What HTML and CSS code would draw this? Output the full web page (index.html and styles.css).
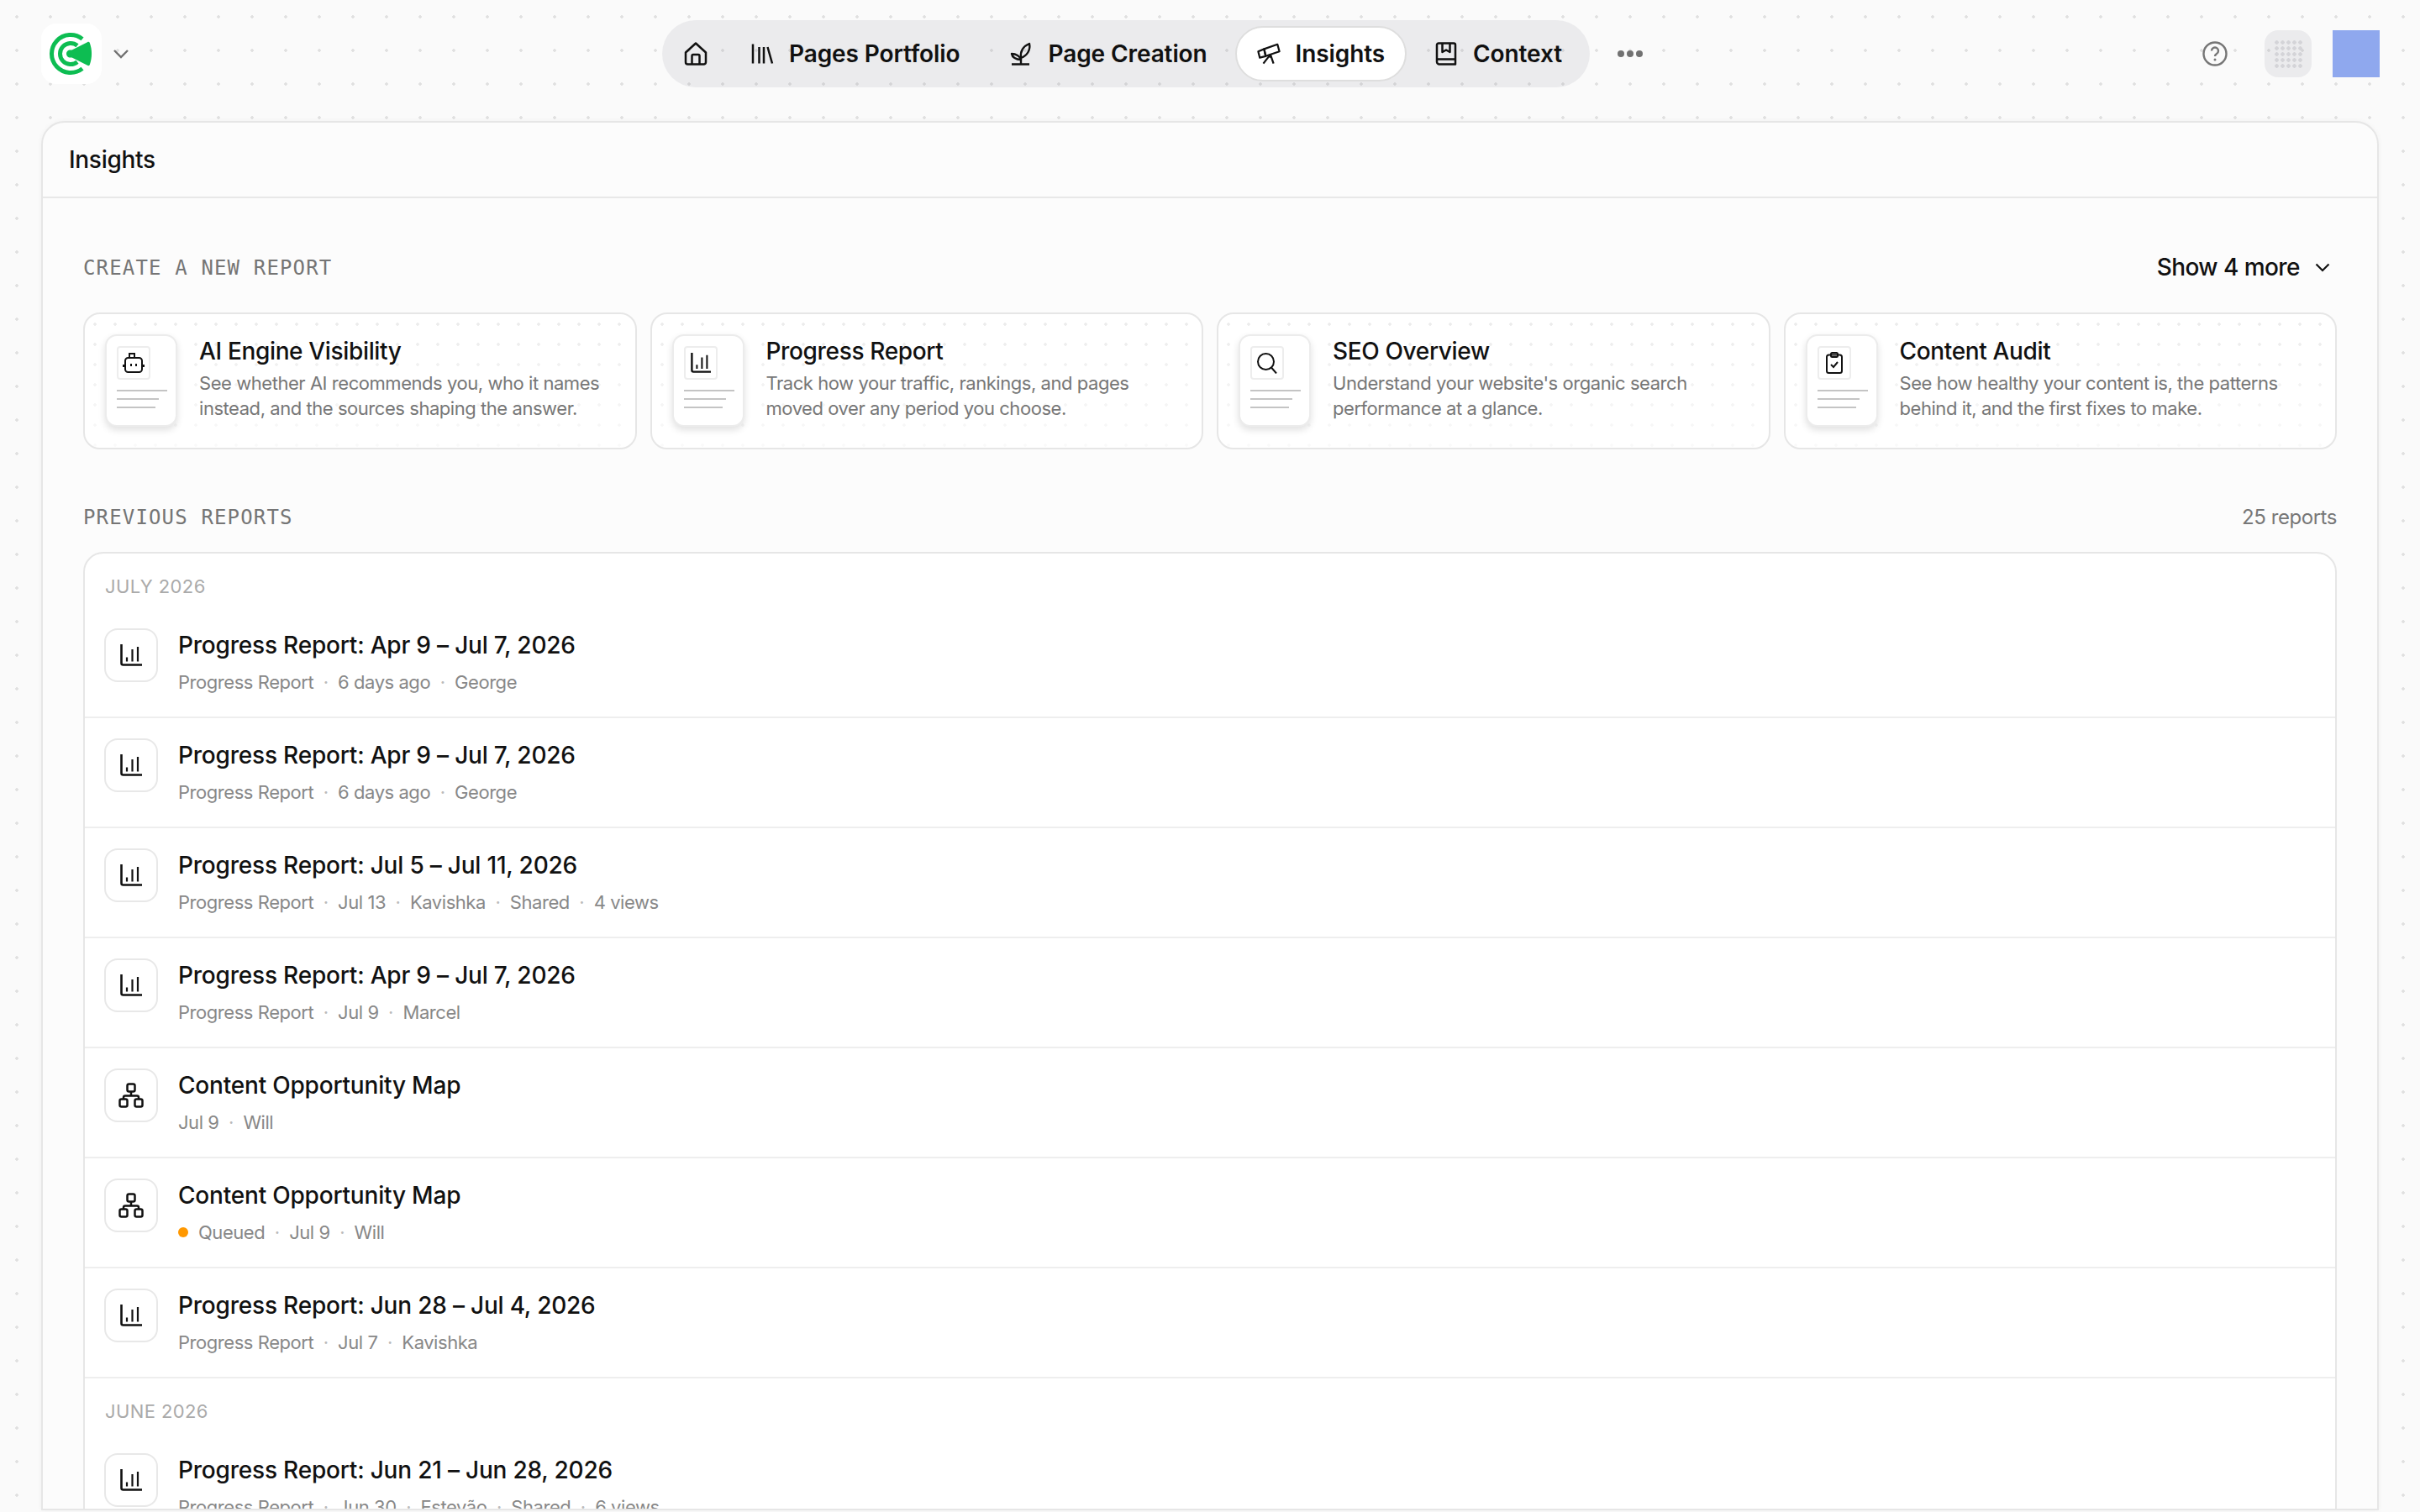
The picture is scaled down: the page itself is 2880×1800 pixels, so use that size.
FILE: index.html
```html
<!DOCTYPE html>
<html lang="en">
<head>
    <meta charset="UTF-8">
    <meta name="viewport" content="width=device-width, initial-scale=1.0">
    <title>Insights</title>
    <link rel="stylesheet" href="styles.css">
</head>
<body>
    <svg class="defs" aria-hidden="true">
        <symbol id="i-bars" viewBox="0 0 26 26">
            <path d="M1.500 0v22.500a2 2 0 0 0 2 2H26" fill="none" stroke="currentColor" stroke-width="2.600"/>
            <path d="M8 15.500v5M14.500 6v14.500M21 3v17.500" fill="none" stroke="currentColor" stroke-width="2.200"/>
        </symbol>
        <symbol id="i-org" viewBox="0 0 30 30">
            <g fill="none" stroke="currentColor" stroke-width="2.500">
                <rect x="10.500" y="1.500" width="9" height="9" rx="2"/>
                <rect x="1.500" y="19.500" width="9" height="9" rx="2"/>
                <rect x="19.500" y="19.500" width="9" height="9" rx="2"/>
                <path d="M15 10.500v5M6 19.500v-2a2 2 0 0 1 2-2h14a2 2 0 0 1 2 2v2"/>
            </g>
        </symbol>
    </svg>

    <header class="topbar">
        <div class="brand">
            <div class="brand-tile">
                <svg width="54" height="52" viewBox="0 0 54 52">
                    <g fill="none" stroke="#0dbd52" stroke-width="5">
                        <path d="M40 8.400A22.500 22.500 0 1 0 40 43.600"/>
                        <path d="M34 16.200A12.600 12.600 0 1 0 34 35.800"/>
                    </g>
                    <path d="M21 26c0-2.400 2-4.500 4.500-4.500 1 0 1.800.2 2.600-.3L46 12.200c1.300-.7 2.300-.4 2.800.9 3 8.200 3 17.600 0 25.800-.5 1.300-1.500 1.600-2.800.9L28.100 30.800c-.8-.5-1.600-.3-2.600-.3-2.500 0-4.500-2.100-4.500-4.500z" fill="#0dbd52"/>
                </svg>
            </div>
            <svg class="brand-caret" width="20" height="12" viewBox="0 0 20 12"><path d="M2 2l8 8 8-8" fill="none" stroke="#707070" stroke-width="2.400"/></svg>
        </div>

        <nav class="nav">
            <div class="nav-pill">
                <a class="nav-item home">
                    <svg class="nav-icon" viewBox="0 0 28 28"><g fill="none" stroke="#111" stroke-width="2.500" stroke-linejoin="round"><path d="M2 12.500L14 1.500l12 11v11.500a2.500 2.500 0 0 1-2.500 2.500h-19A2.500 2.500 0 0 1 2 24z"/><path d="M9.500 26.500V16.500a1.500 1.500 0 0 1 1.500-1.500h6a1.500 1.500 0 0 1 1.500 1.500v10"/></g></svg>
                </a>
                <a class="nav-item">
                    <svg class="nav-icon" viewBox="0 0 28 28"><path d="M3 2.500v23M10.500 6v19.500M16 6v19.500M20.500 6l5.500 19.500" fill="none" stroke="#111" stroke-width="2.500"/></svg>
                    Pages Portfolio
                </a>
                <a class="nav-item">
                    <svg class="nav-icon" viewBox="0 0 28 28"><g fill="none" stroke="#111" stroke-width="2.400" stroke-linejoin="round"><path d="M3 26.500h21M14 26.500V19"/><path d="M14 19c-1-8 3-14 10-17 1.500 7-2 14-10 17z"/><path d="M14 21c-1-4-6-7-11-7 .5 4 5 7 11 7z"/></g></svg>
                    Page Creation
                </a>
                <a class="nav-item active">
                    <svg class="nav-icon" viewBox="0 0 30 28"><g fill="none" stroke="#111" stroke-width="2.400" stroke-linejoin="round"><path d="M9 8l17-6 2.500 9L11 17z"/><path d="M1.500 11L9 8l2 9-7.500 2z"/><path d="M17 15L8 26.500M17 15l4 11.500M17 15v4"/></g></svg>
                    Insights
                </a>
                <a class="nav-item">
                    <svg class="nav-icon" viewBox="0 0 28 28"><g fill="none" stroke="#111" stroke-width="2.500" stroke-linejoin="round"><path d="M3 22V3.500A2 2 0 0 1 5 1.500h18a2 2 0 0 1 2 2v23H6a3 3 0 0 1-3-3z"/><path d="M3 20.500h22"/><path d="M9.500 2v10l4.500-2.500 4.500 2.500V2"/></g></svg>
                    Context
                </a>
            </div>
            <div class="nav-more"><i></i><i></i><i></i></div>
        </nav>

        <div class="actions">
            <svg class="help" width="30" height="30" viewBox="0 0 30 30">
                <circle cx="15" cy="15" r="13.500" fill="none" stroke="#767676" stroke-width="2.400"/>
                <path d="M11 11.500a4 4 0 1 1 6 3.500c-1.300.8-2 1.400-2 3" fill="none" stroke="#767676" stroke-width="2.400"/>
                <circle cx="15" cy="22" r="1.500" fill="#767676"/>
            </svg>
            <div class="apps"><div class="apps-dots"></div></div>
            <div class="avatar"></div>
        </div>
    </header>

    <main class="panel">
        <div class="panel-head">Insights</div>
        <div class="panel-body">
            <div class="section-head">
                <span class="section-label">CREATE A NEW REPORT</span>
                <span class="show-more">Show 4 more
                    <svg width="18" height="11" viewBox="0 0 18 11"><path d="M1.500 1.500L9 9l7.500-7.500" fill="none" stroke="#111" stroke-width="2.200"/></svg>
                </span>
            </div>

            <div class="cards">
                <div class="card">
                    <div class="thumb">
                        <div class="thumb-icon">
                            <svg width="26" height="26" viewBox="0 0 26 26"><g fill="none" stroke="#111" stroke-width="2"><rect x="3" y="7" width="20" height="17" rx="3.500"/><path d="M8 7V2h6v5M1 15v3M25 15v3M10 14v3M16 14v3"/></g></svg>
                        </div>
                        <div class="thumb-line w1"></div>
                        <div class="thumb-line w2"></div>
                        <div class="thumb-line w3"></div>
                    </div>
                    <div class="card-text">
                        <div class="card-title">AI Engine Visibility</div>
                        <div class="card-desc">See whether AI recommends you, who it names instead, and the sources shaping the answer.</div>
                    </div>
                </div>
                <div class="card">
                    <div class="thumb">
                        <div class="thumb-icon">
                            <svg width="24" height="24"><use href="#i-bars"/></svg>
                        </div>
                        <div class="thumb-line w1"></div>
                        <div class="thumb-line w2"></div>
                        <div class="thumb-line w3"></div>
                    </div>
                    <div class="card-text">
                        <div class="card-title">Progress Report</div>
                        <div class="card-desc">Track how your traffic, rankings, and pages moved over any period you choose.</div>
                    </div>
                </div>
                <div class="card">
                    <div class="thumb">
                        <div class="thumb-icon">
                            <svg width="26" height="26" viewBox="0 0 26 26"><g fill="none" stroke="#111" stroke-width="2"><circle cx="11.500" cy="11.500" r="9.500"/><path d="M18 18.500l6 7"/></g></svg>
                        </div>
                        <div class="thumb-line w1"></div>
                        <div class="thumb-line w2"></div>
                        <div class="thumb-line w3"></div>
                    </div>
                    <div class="card-text">
                        <div class="card-title">SEO Overview</div>
                        <div class="card-desc">Understand your website's organic search performance at a glance.</div>
                    </div>
                </div>
                <div class="card">
                    <div class="thumb">
                        <div class="thumb-icon">
                            <svg width="24" height="26" viewBox="0 0 24 26"><g fill="none" stroke="#111" stroke-width="2"><rect x="3" y="3.500" width="18" height="21.500" rx="2.500"/><rect x="8" y="1" width="8" height="5" rx="1.500"/><path d="M8 15l3 3 5-6"/></g></svg>
                        </div>
                        <div class="thumb-line w1"></div>
                        <div class="thumb-line w2"></div>
                        <div class="thumb-line w3"></div>
                    </div>
                    <div class="card-text">
                        <div class="card-title">Content Audit</div>
                        <div class="card-desc">See how healthy your content is, the patterns behind it, and the first fixes to make.</div>
                    </div>
                </div>
            </div>

            <div class="section-head previous">
                <span class="section-label">PREVIOUS REPORTS</span>
                <span class="count">25 reports</span>
            </div>

            <div class="list">
                <div class="group-label">JULY 2026</div>
                <div class="row">
                    <div class="row-icon"><svg width="26" height="26"><use href="#i-bars"/></svg></div>
                    <div>
                        <div class="row-title">Progress Report: Apr 9 – Jul 7, 2026</div>
                        <div class="row-meta"><span>Progress Report</span><b>·</b><span>6 days ago</span><b>·</b><span>George</span></div>
                    </div>
                </div>
                <div class="row">
                    <div class="row-icon"><svg width="26" height="26"><use href="#i-bars"/></svg></div>
                    <div>
                        <div class="row-title">Progress Report: Apr 9 – Jul 7, 2026</div>
                        <div class="row-meta"><span>Progress Report</span><b>·</b><span>6 days ago</span><b>·</b><span>George</span></div>
                    </div>
                </div>
                <div class="row">
                    <div class="row-icon"><svg width="26" height="26"><use href="#i-bars"/></svg></div>
                    <div>
                        <div class="row-title">Progress Report: Jul 5 – Jul 11, 2026</div>
                        <div class="row-meta"><span>Progress Report</span><b>·</b><span>Jul 13</span><b>·</b><span>Kavishka</span><b>·</b><span>Shared</span><b>·</b><span>4 views</span></div>
                    </div>
                </div>
                <div class="row">
                    <div class="row-icon"><svg width="26" height="26"><use href="#i-bars"/></svg></div>
                    <div>
                        <div class="row-title">Progress Report: Apr 9 – Jul 7, 2026</div>
                        <div class="row-meta"><span>Progress Report</span><b>·</b><span>Jul 9</span><b>·</b><span>Marcel</span></div>
                    </div>
                </div>
                <div class="row">
                    <div class="row-icon"><svg width="30" height="30"><use href="#i-org"/></svg></div>
                    <div>
                        <div class="row-title">Content Opportunity Map</div>
                        <div class="row-meta"><span>Jul 9</span><b>·</b><span>Will</span></div>
                    </div>
                </div>
                <div class="row">
                    <div class="row-icon"><svg width="30" height="30"><use href="#i-org"/></svg></div>
                    <div>
                        <div class="row-title">Content Opportunity Map</div>
                        <div class="row-meta"><i class="status"></i><span>Queued</span><b>·</b><span>Jul 9</span><b>·</b><span>Will</span></div>
                    </div>
                </div>
                <div class="row">
                    <div class="row-icon"><svg width="26" height="26"><use href="#i-bars"/></svg></div>
                    <div>
                        <div class="row-title">Progress Report: Jun 28 – Jul 4, 2026</div>
                        <div class="row-meta"><span>Progress Report</span><b>·</b><span>Jul 7</span><b>·</b><span>Kavishka</span></div>
                    </div>
                </div>
                <div class="group-label">JUNE 2026</div>
                <div class="row">
                    <div class="row-icon"><svg width="26" height="26"><use href="#i-bars"/></svg></div>
                    <div>
                        <div class="row-title">Progress Report: Jun 21 – Jun 28, 2026</div>
                        <div class="row-meta"><span>Progress Report</span><b>·</b><span>Jun 30</span><b>·</b><span>Estevão</span><b>·</b><span>Shared</span><b>·</b><span>6 views</span></div>
                    </div>
                </div>
            </div>
        </div>
    </main>
</body>
</html>
```

FILE: styles.css
```css
* {
    box-sizing: border-box;
}

html, body {
    height: 100%;
}

body {
    margin: 0;
    overflow: hidden;
    display: flex;
    flex-direction: column;
    font-family: Inter, "Liberation Sans", sans-serif;
    color: #111;
    background-color: #fafafa;
    background-image: radial-gradient(circle, #e0e0e0 1.500px, transparent 2px);
    background-size: 40px 40px;
    background-position: 0 0;
}

.defs {
    display: none;
}

/* Top bar */
.topbar {
    flex: none;
    height: 144px;
    padding: 24px 48px 0 49px;
    display: grid;
    grid-template-columns: 739px auto 1fr;
    align-items: start;
}

.brand {
    height: 80px;
    display: flex;
    align-items: center;
    gap: 13px;
}

.brand-tile {
    width: 72px;
    height: 72px;
    background: #fff;
    border-radius: 18px;
    display: flex;
    align-items: center;
    padding-left: 9px;
}

.nav {
    display: flex;
    align-items: center;
    gap: 33px;
}

.nav-pill {
    height: 80px;
    padding: 0 7px;
    display: flex;
    align-items: center;
    gap: 7px;
    border-radius: 40px;
    background: rgba(120, 120, 135, 0.11);
}

.nav-item {
    height: 66px;
    padding: 0 24px;
    display: flex;
    align-items: center;
    gap: 18px;
    border: 2px solid transparent;
    border-radius: 33px;
    font-size: 28px;
    font-weight: 600;
    letter-spacing: -0.100px;
    white-space: nowrap;
}

.nav-item.home {
    padding: 0 16.500px;
}

.nav-item.active {
    background: #fff;
    border-color: #dedede;
}

.nav-icon {
    width: 28px;
    height: 28px;
    flex: none;
}

.nav-more {
    display: flex;
    gap: 3px;
}

.nav-more i {
    width: 8px;
    height: 8px;
    border-radius: 50%;
    background: #717171;
}

.actions {
    height: 80px;
    display: flex;
    align-items: center;
    justify-content: flex-end;
    gap: 25px;
}

.help {
    margin-right: 19px;
}

.apps {
    width: 56px;
    height: 56px;
    border-radius: 16px;
    background: rgba(120, 120, 135, 0.11);
    display: flex;
    align-items: center;
    justify-content: center;
}

.apps-dots {
    width: 35px;
    height: 35px;
    background-image: radial-gradient(circle, #d4d4d8 2px, transparent 2.500px);
    background-size: 7px 7px;
}

.avatar {
    width: 56px;
    height: 56px;
    background: #8fa8ee;
}

/* Main panel */
.panel {
    flex: 1;
    min-height: 0;
    margin: 0 49px 2px 49px;
    background: #fcfcfc;
    border: 2px solid #e6e6e6;
    border-radius: 28px 28px 0 0;
    overflow: hidden;
    box-shadow: 0 0 6px rgba(0, 0, 0, 0.04);
}

.panel-head {
    height: 90px;
    padding-left: 31px;
    display: flex;
    align-items: center;
    font-size: 28px;
    font-weight: 500;
    letter-spacing: -0.3px;
    border-bottom: 2px solid #e8e8e8;
}

.panel-body {
    padding: 66px 48px 0;
}

.section-head {
    height: 32px;
    display: flex;
    align-items: center;
    justify-content: space-between;
}

.section-label {
    padding-top: 2px;
    font-family: "DejaVu Sans Mono", monospace;
    font-size: 24px;
    letter-spacing: 1.150px;
    color: #757575;
}

.show-more {
    display: flex;
    align-items: center;
    gap: 18px;
    margin-right: 8px;
    font-size: 28px;
    font-weight: 500;
    letter-spacing: -0.550px;
}

.count {
    font-size: 24px;
    letter-spacing: -0.450px;
    color: #777;
}

.cards {
    margin-top: 38px;
    display: grid;
    grid-template-columns: repeat(4, 1fr);
    gap: 16px;
}

.card {
    position: relative;
    padding: 24px 24px 25px;
    display: flex;
    gap: 26px;
    background: #fff;
    border: 2px solid #e6e6e6;
    border-radius: 20px;
    overflow: hidden;
}

/* dotted backdrop, fades toward the bottom */
.card::before {
    content: "";
    position: absolute;
    inset: 0;
    background-image: radial-gradient(circle, #ebebeb 1.500px, transparent 2px);
    background-size: 24px 24px;
    -webkit-mask-image: linear-gradient(to bottom, #000, rgba(0, 0, 0, 0.25));
    mask-image: linear-gradient(to bottom, #000, rgba(0, 0, 0, 0.25));
}

.thumb {
    position: relative;
    flex: none;
    width: 86px;
    height: 110px;
    padding: 12px;
    background: #fff;
    border: 2px solid #ececec;
    border-radius: 14px;
    box-shadow: 0 4px 8px rgba(0, 0, 0, 0.12);
}

.thumb-icon {
    width: 40px;
    height: 40px;
    margin-bottom: 12px;
    border: 2px solid #ededed;
    border-radius: 4px;
    display: flex;
    align-items: center;
    justify-content: center;
}

.thumb-line {
    height: 2px;
    margin-bottom: 8px;
    background: #c4c4c4;
}

.thumb-line.w1 { width: 60px; }
.thumb-line.w2 { width: 50px; }
.thumb-line.w3 { width: 46px; }

.card-text {
    position: relative;
    padding-top: 2px;
}

.card-title {
    font-size: 28px;
    line-height: 36px;
    font-weight: 500;
    letter-spacing: -0.350px;
}

.card-desc {
    margin-top: 5px;
    font-size: 22px;
    line-height: 30px;
    letter-spacing: -0.450px;
    color: #777;
}

.section-head.previous {
    margin-top: 64px;
}

.list {
    margin-top: 26px;
    background: #fff;
    border: 2px solid #e6e6e6;
    border-radius: 24px;
}

.group-label {
    height: 65px;
    padding: 23px 24px 10px;
    font-size: 22px;
    line-height: 32px;
    letter-spacing: 0.400px;
    color: #aaa;
}

.row {
    height: 131px;
    padding: 24px 24px 24px 23px;
    display: flex;
    gap: 24px;
    border-bottom: 2px solid #eeeeee;
}

.row-icon {
    flex: none;
    width: 64px;
    height: 64px;
    border: 2px solid #e8e8e8;
    border-radius: 16px;
    display: flex;
    align-items: center;
    justify-content: center;
}

.row-title {
    font-size: 28px;
    line-height: 40px;
    font-weight: 500;
    letter-spacing: -0.200px;
}

.row-meta {
    margin-top: 8px;
    display: flex;
    align-items: center;
    font-size: 22px;
    line-height: 32px;
    letter-spacing: -0.450px;
    color: #888;
}

.row-meta b {
    margin: 0 11.500px;
    font-weight: 400;
    color: #bbb;
}

.status {
    width: 12px;
    height: 12px;
    margin-right: 12px;
    border-radius: 50%;
    background: #ff9800;
}
```
